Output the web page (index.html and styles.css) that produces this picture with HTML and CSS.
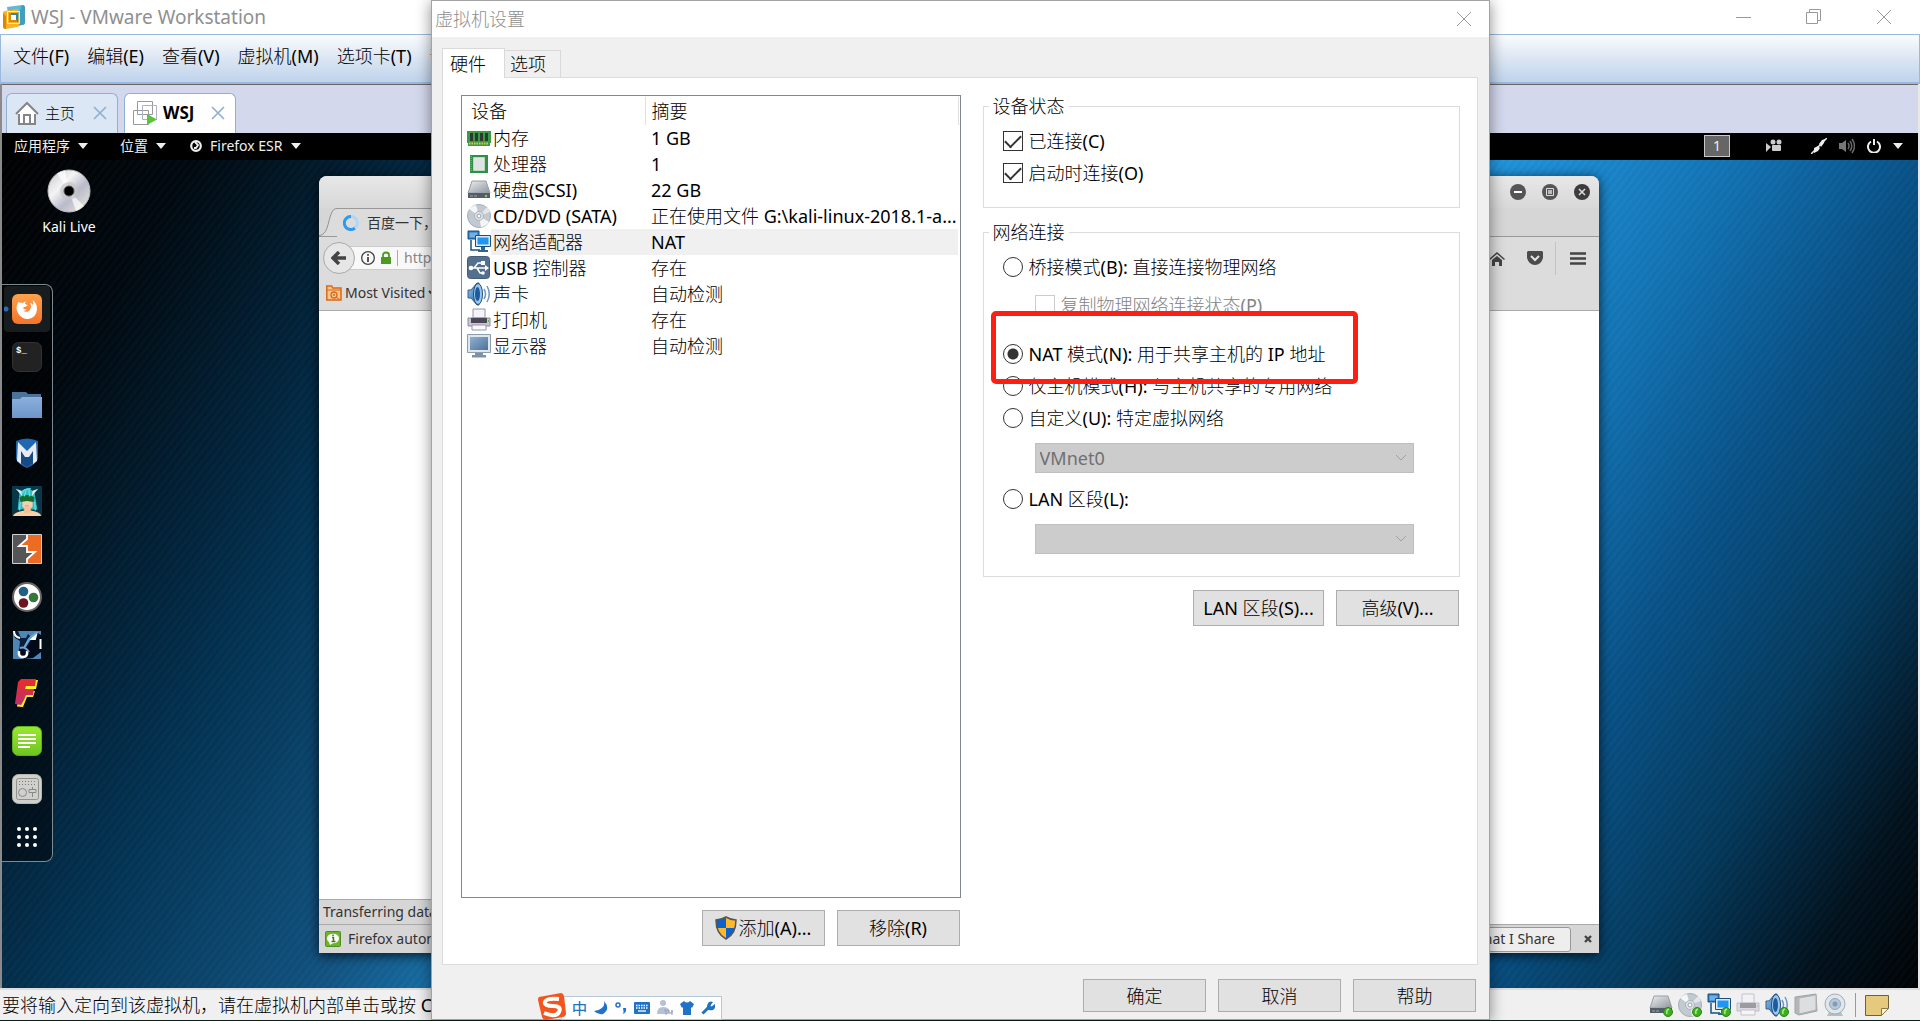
FILE: index.html
```html
<!DOCTYPE html>
<html lang="zh-CN">
<head>
<meta charset="utf-8">
<title>WSJ - VMware Workstation</title>
<link rel="stylesheet" href="styles.css">
</head>
<body>
<svg class="defs" aria-hidden="true">
  <defs>
    <linearGradient id="g-metal" x1="0" y1="0" x2="1" y2="1"><stop offset="0" stop-color="#eceef1"/><stop offset="1" stop-color="#8f959d"/></linearGradient>
    <linearGradient id="g-blue" x1="0" y1="0" x2="1" y2="1"><stop offset="0" stop-color="#8fc3ee"/><stop offset="1" stop-color="#1d63a8"/></linearGradient>
    <linearGradient id="g-screen" x1="0" y1="0" x2="1" y2="1"><stop offset="0" stop-color="#8fb0d0"/><stop offset="1" stop-color="#4d7299"/></linearGradient>
    <linearGradient id="g-disc" x1="0" y1="0" x2="1" y2="1"><stop offset="0" stop-color="#c9c6ca"/><stop offset=".35" stop-color="#f4f4f4"/><stop offset=".6" stop-color="#b9bacb"/><stop offset="1" stop-color="#eeeedd"/></linearGradient>
    <linearGradient id="g-fox" x1="0" y1="0" x2="0" y2="1"><stop offset="0" stop-color="#ffa14c"/><stop offset="1" stop-color="#f2742b"/></linearGradient>
    <linearGradient id="g-green" x1="0" y1="0" x2="0" y2="1"><stop offset="0" stop-color="#98ea2e"/><stop offset="1" stop-color="#6fc322"/></linearGradient>
    <linearGradient id="g-folder" x1="0" y1="0" x2="0" y2="1"><stop offset="0" stop-color="#8db0dc"/><stop offset="1" stop-color="#6d96c9"/></linearGradient>
    <linearGradient id="g-f" x1="0" y1="0" x2="0" y2="1"><stop offset="0" stop-color="#ee2a2a"/><stop offset="1" stop-color="#b8336e"/></linearGradient>
    <symbol id="i-hdd" viewBox="0 0 24 24"><path d="M5 3h14l4 12H1z" fill="url(#g-metal)" stroke="#9a9fa5"/><path d="M1 15h22v5H1z" fill="#535d68"/><path d="M3 17h3v2H3zM7 17h3v2H7z" fill="#79838d"/><circle cx="19" cy="18" r="1.200" fill="#7ed348"/></symbol>
    <symbol id="i-cd" viewBox="0 0 24 24"><circle cx="12" cy="12" r="11.500" fill="#c3c9d0" stroke="#a5adb6"/><path d="M12 12 2 5A12 12 0 0 1 9 1zM12 12l10 6a12 12 0 0 1-8 5z" fill="#f4f6f8"/><path d="M12 12 20 3a12 12 0 0 1 3 5z" fill="#e2e6ea"/><circle cx="12" cy="12" r="4.500" fill="#dfe4e8" stroke="#aab3bb"/><circle cx="12" cy="12" r="2" fill="#fff" stroke="#98a2ac"/></symbol>
    <symbol id="i-net" viewBox="0 0 24 24"><path d="M4 10v10h9" fill="none" stroke="#1d4f7c" stroke-width="1.500"/><path d="M1 1h11v8H1z" fill="#2f7cc0" stroke="#1d4f7c"/><path d="M2.500 2.500h8v5h-8z" fill="#6db1ea"/><path d="M8.500 5.500h15v11h-15z" fill="#d8e8f6" stroke="#1d4f7c"/><path d="M10.500 7.500h11v7h-11z" fill="#1f96f0"/><path d="M14 17h4v3h-4z" fill="#2a6599"/><path d="M11 20h10v2H11z" fill="#2a6599"/></symbol>
    <symbol id="i-printer" viewBox="0 0 24 24"><path d="M6 1h12v9H6z" fill="#f4f4f8" stroke="#9a94ae"/><path d="M1 10h22v8H1z" fill="#c9c6d3" stroke="#8f8aa2"/><path d="M4 10h16v5H4z" fill="#4a4856"/><path d="M5 17h14v5H5z" fill="#fafafc" stroke="#9a94ae"/><path d="M21 12h1v2h-1z" fill="#52c234"/></symbol>
    <symbol id="i-sound" viewBox="0 0 24 24"><path d="M1 8h3l6-7h2v22h-2l-6-7H1z" fill="url(#g-blue)" stroke="#3b5e82"/><ellipse cx="11" cy="12" rx="4.500" ry="10.500" fill="#9cc6ee" stroke="#24507c"/><ellipse cx="10.500" cy="12" rx="2.500" ry="7" fill="#1c5c9e"/><path d="M17 7q3 5 0 10M20 4q4.500 8 0 16" fill="none" stroke="#6c98c4" stroke-width="1.500"/></symbol>
    <symbol id="i-ok" viewBox="0 0 10 10"><circle cx="5" cy="5" r="4.500" fill="#3fae22" stroke="#2c8416"/><path d="M4 7q-1-4 2-5" fill="none" stroke="#a8ee84" stroke-width="1.500"/></symbol>
    <symbol id="i-x" viewBox="0 0 16 16"><path d="M1 1l14 14M15 1 1 15" fill="none" stroke="currentColor"/></symbol>
    <symbol id="i-x-bold" viewBox="0 0 14 14"><path d="M1 1l12 12M13 1 1 13" fill="none" stroke="currentColor" stroke-width="1.700"/></symbol>
    <symbol id="i-caret" viewBox="0 0 10 6"><path d="M0 0h10L5 6z" fill="currentColor"/></symbol>
    <symbol id="i-chev" viewBox="0 0 12 8"><path d="M1 1l5 5 5-5" fill="none" stroke="#a0a0a0"/></symbol>
  </defs>
</svg>

<header class="titlebar">
  <svg class="app-icon" viewBox="0 0 24 24"><path d="M5 2 20 0q3 0 3 3v14q0 3-3 3L8 22z" fill="#5fb9d0"/><path d="M20 0q3 0 3 3v14q0 3-3 3l-3 .5V9z" fill="#3f9fbd"/><path d="M3 6l13-2 1 16q0 2-2 2L4 24q-3 0-3-3L1 8q0-2 2-2z" fill="#f8b323"/><path d="M1 8v13q0 3 3 3V11z" fill="#d8870c"/><path d="M5.500 6.500h12v12h-12z" fill="none" stroke="#fff" stroke-width=".8"/><path d="M8 9h7v7H8z" fill="#fff" stroke="#2e86a8" stroke-width="2"/><path d="M8 8v8h7" fill="none" stroke="#d8870c" stroke-width="2"/></svg>
  <h1 class="app-title">WSJ - VMware Workstation</h1>
  <div class="win-controls">
    <button type="button" class="plain" aria-label="最小化"><svg width="16" height="16" viewBox="0 0 16 16"><path d="M0 8.500h15" stroke="#999"/></svg></button>
    <button type="button" class="plain" aria-label="还原"><svg width="16" height="16" viewBox="0 0 16 16"><path d="M.5 3.500h11v11H.5zM3.500 3.500v-3h11v11h-3" fill="none" stroke="#999"/></svg></button>
    <button type="button" class="plain grey" aria-label="关闭"><svg width="16" height="16"><use href="#i-x"/></svg></button>
  </div>
</header>

<nav class="menubar">
  <a href="#">文件(F)</a><a href="#">编辑(E)</a><a href="#">查看(V)</a><a href="#">虚拟机(M)</a><a href="#">选项卡(T)</a><a href="#">帮</a>
</nav>

<main class="vm">
  <div class="vm-tabs">
    <div class="vm-tab">
      <svg width="24" height="24" viewBox="0 0 24 24"><path d="M4 11v12h16V11" fill="#fff" stroke="#858585" stroke-width="2"/><path d="M1 13 12 2l11 11" fill="#fff" stroke="#858585" stroke-width="2"/><path d="M9 22v-8h6v8" fill="none" stroke="#858585" stroke-width="2"/></svg>
      <span>主页</span>
      <button type="button" class="plain tab-x" aria-label="关闭主页"><svg width="14" height="14"><use href="#i-x-bold"/></svg></button>
    </div>
    <div class="vm-tab current">
      <svg width="24" height="24" viewBox="0 0 24 24"><path d="M4.500.500h15v13h-15zM.500 9.500h15v14H.500z" fill="none" stroke="#999"/><path d="M9.500 4.500h14v14h-14z" fill="none" stroke="#aab4c4"/><path d="M14 13l10 5.500L14 24z" fill="#5cc23a"/></svg>
      <span>WSJ</span>
      <button type="button" class="plain tab-x" aria-label="关闭 WSJ"><svg width="14" height="14"><use href="#i-x-bold"/></svg></button>
    </div>
  </div>

  <div class="topbar">
    <a href="#">应用程序 <svg width="10" height="6"><use href="#i-caret"/></svg></a>
    <a href="#">位置 <svg width="10" height="6"><use href="#i-caret"/></svg></a>
    <a href="#" class="fox"><svg width="12" height="12" viewBox="0 0 12 12"><circle cx="6" cy="6" r="4.800" fill="none" stroke="#eee" stroke-width="2.200"/><path d="M5 2l3 3-2 3H4" fill="none" stroke="#eee" stroke-width="1.800"/></svg>Firefox ESR <svg width="10" height="6"><use href="#i-caret"/></svg></a>
    <div class="tray">
      <span class="workspace">1</span>
      <svg class="t-cam" width="16" height="14" viewBox="0 0 16 14"><circle cx="7" cy="3" r="2.500" fill="#ccc"/><circle cx="13" cy="3" r="2.500" fill="#ccc"/><rect x="6" y="6" width="9" height="6" rx="1" fill="#ccc"/><path d="M0 4l5 4-5 5z" fill="#ccc"/></svg>
      <svg class="t-plug" width="16" height="16" viewBox="0 0 16 16"><path d="M0 16 16 0" stroke="#eee" stroke-width="1.500"/><path d="M3 10l4-2 2 2-2 3-4 2zM8 6l3-4 3-1-1 4-3 4z" fill="#eee"/></svg>
      <svg class="t-vol" width="16" height="16" viewBox="0 0 16 16"><path d="M0 5h3l4-3v12l-4-3H0z" fill="#777"/><path d="M9 5q2 3 0 6M11 3q3.500 5 0 10M13 1q5 7 0 14" fill="none" stroke="#666" stroke-width="1.500"/></svg>
      <svg class="t-pow" width="14" height="14" viewBox="0 0 14 14"><path d="M4 2.500a6 6 0 1 0 6 0M7 0v6" fill="none" stroke="#eee" stroke-width="2"/></svg>
      <svg width="10" height="6" class="t-caret"><use href="#i-caret"/></svg>
    </div>
  </div>

  <div class="desktop">
    <a href="#" class="desk-icon">
      <svg width="44" height="44" viewBox="0 0 44 44"><circle cx="22" cy="22" r="21" fill="url(#g-disc)" stroke="#bbb"/><path d="M22 22 10 4.500A21 21 0 0 1 18 1.500zM22 22l15 15a21 21 0 0 1-8 5z" fill="#fff" opacity=".7"/><circle cx="22" cy="22" r="9" fill="#c6c6c8" opacity=".7"/><circle cx="22" cy="22" r="5" fill="#000" stroke="#555"/></svg>
      Kali Live
    </a>

    <nav class="dock">
      <button type="button" class="plain on" aria-label="Firefox"><svg viewBox="0 0 30 30"><rect width="30" height="30" rx="6" fill="url(#g-fox)"/><path d="M6.500 8q-4 6 0 12 4 5.500 10 5 8-1.500 8.500-10 0-6-4.500-9 1.500 3 .5 5-1.500-2-3-2 1.500 2 1 4-.5 3-3 4.500-3 1-5-1 3 .5 4-1-3 .5-4-1.500 1-1.500 3-1.500 1-1 2-1.500-2 0-3-1.500 0-1 1-2-2 0-3 1.500-2-.5-3.500-.500z" fill="#fff"/></svg></button>
      <button type="button" class="plain" aria-label="终端"><svg viewBox="0 0 30 30"><rect x=".5" y=".5" width="29" height="29" rx="6" fill="#222" stroke="#333"/><text x="4" y="11" class="term">$_</text></svg></button>
      <button type="button" class="plain" aria-label="文件"><svg viewBox="0 0 30 30"><path d="M0 2h14l2 2h13v5H0z" fill="#4a739b"/><path d="M0 9h8l2-2h20v21H0z" fill="url(#g-folder)"/></svg></button>
      <button type="button" class="plain" aria-label="Metasploit"><svg viewBox="0 0 30 30"><path d="M4 3q11-5 22 0v18q-3 6-11 9-8-3-11-9z" fill="#1f67b0"/><path d="M15 14v15l-6-4V12zM15 14l6-2v13l-6 4z" fill="#174a85"/><path d="M6 4l9 9 9-9 1 19-4 3V13l-4 6h-4l-4-6v13l-4-3z" fill="#e8eaf2"/></svg></button>
      <button type="button" class="plain" aria-label="Armitage"><svg viewBox="0 0 32 32"><path d="M0 0h32v32H0z" fill="#06384a"/><path d="M8 7q8-8 16 0l3 18H6z" fill="#31bcc4"/><path d="M4 3l6 2 1 6zM28 3l-6 2-1 6z" fill="#e6ece8"/><path d="M11 13h11v9q-5 6-11 0z" fill="#f7cfae"/><path d="M1 32q1-4 12-6h7q11 2 11 6z" fill="#f9cfa5"/><path d="M13 22h7v7h-7z" fill="#f3c299"/><path d="M8 12q8-5 16 0l-1 5-7-1-7 1z" fill="#176b2c"/><path d="M11 8q1-5 9-5M13 11l2-6M19 11l-1-7M9 17l-1 9M24 17l1 9" fill="none" stroke="#5fe0e2" stroke-width="1.500"/><path d="M14 21h4" stroke="#d98"/></svg></button>
      <button type="button" class="plain" aria-label="Burp Suite"><svg viewBox="0 0 30 30"><path d="M1 1h28v28H1z" fill="#ec6c23"/><path d="M1 1h14v5l-7 6h7v7h7l-7 6v4H1z" fill="#555557"/><path d="M15 1v4l-8 7h8v6h8l-8 7v4" fill="none" stroke="#fff" stroke-width="1.800"/><path d="M.5.5h29v29H.5z" fill="none" stroke="#d0d0d0"/></svg></button>
      <button type="button" class="plain" aria-label="Maltego"><svg viewBox="0 0 30 30"><circle cx="15" cy="15" r="14" fill="#fff" stroke="#6b6664" stroke-width="2"/><circle cx="11.500" cy="9.500" r="4.800" fill="#215f85"/><circle cx="21.500" cy="15.500" r="4.800" fill="#35783b"/><circle cx="11.500" cy="21" r="4.800" fill="#6b1522"/></svg></button>
      <button type="button" class="plain" aria-label="BeEF"><svg viewBox="0 0 30 30"><path d="M1 1h28v28H1z" fill="#4e86b6"/><path d="M14 17 24 2l5 3v17l-8 6-9 1-6-4 1-6z" fill="#020a1a"/><path d="M1 1h5l3 7h5l2-4 2 2-5 11-6 4 1-10-5-3z" fill="#0c1d38"/><path d="M2 1q0 6 6 7M19 9l5-4-1 4zM28.500 9v10" fill="none" stroke="#fff" stroke-width="2"/><path d="M7 21q-1 6 4 6t4-6" fill="none" stroke="#fff" stroke-width="2.500"/><path d="M8 18q5-2 9 4M12 18l5-9 8-7" fill="none" stroke="#6aa6d6" stroke-width="2"/></svg></button>
      <button type="button" class="plain" aria-label="Faraday"><svg viewBox="0 0 30 30"><path d="M10 2h16l-2 9h-8v2h7l-2 6h-6l-2 5-2 5-6-.5z" fill="#ffef1a"/><path d="M9 1h15l-1 7h-9l-1 3h9l-1 6h-7l-2 5-3 5-6-1L6 4z" fill="url(#g-f)"/></svg></button>
      <button type="button" class="plain" aria-label="Leafpad"><svg viewBox="0 0 30 30"><rect x=".5" y=".5" width="29" height="29" rx="6" fill="url(#g-green)" stroke="#5fae1c"/><path d="M6 9h18M6 13h18M6 17h18M6 21h12" stroke="#fff" stroke-width="2"/></svg></button>
      <button type="button" class="plain" aria-label="Tweaks"><svg viewBox="0 0 30 30"><rect x=".5" y=".5" width="29" height="29" rx="6" fill="#d0d1cc" stroke="#b5b6b1"/><rect x="4.500" y="4.500" width="22" height="21" rx="2" fill="none" stroke="#8f908b"/><path d="M7 7.500h18M7 10.500h18" stroke="#777" stroke-dasharray="1 2"/><circle cx="10.500" cy="18.500" r="4" fill="none" stroke="#888"/><path d="M17 15.500h7v3h-7zM20.500 13v2M20.500 19v4" fill="none" stroke="#888"/></svg></button>
      <button type="button" class="plain" aria-label="显示应用程序"><svg viewBox="0 0 30 30" fill="#fff"><circle cx="7" cy="7" r="2"/><circle cx="15" cy="7" r="2"/><circle cx="23" cy="7" r="2"/><circle cx="7" cy="15" r="2"/><circle cx="15" cy="15" r="2"/><circle cx="23" cy="15" r="2"/><circle cx="7" cy="23" r="2"/><circle cx="15" cy="23" r="2"/><circle cx="23" cy="23" r="2"/></svg></button>
    </nav>

    <section class="browser">
      <div class="b-title">
        <button type="button" class="plain" aria-label="Minimize"><svg width="16" height="16" viewBox="0 0 16 16"><circle cx="8" cy="8" r="8" fill="#555"/><path d="M4 8h8" stroke="#fff" stroke-width="2"/></svg></button>
        <button type="button" class="plain" aria-label="Maximize"><svg width="16" height="16" viewBox="0 0 16 16"><circle cx="8" cy="8" r="8" fill="#555"/><path d="M4.500 4.500h7v7h-7z" fill="none" stroke="#ddd"/><path d="M6 6h4v4H6z" fill="#bbb"/></svg></button>
        <button type="button" class="plain" aria-label="Close"><svg width="16" height="16" viewBox="0 0 16 16"><circle cx="8" cy="8" r="8" fill="#3c3c3c"/><path d="M5 5l6 6M11 5l-6 6" stroke="#ddd" stroke-width="1.500"/></svg></button>
      </div>
      <div class="b-tabs">
        <svg class="curve" width="18" height="28" viewBox="0 0 18 28"><path d="M18 .5C8 .5 11 27.500 0 27.500L18 28z" fill="#dcdcdc"/><path d="M18 .5C8 .5 12 27.500 0 27.500" fill="none" stroke="#8c9096"/></svg>
        <div class="b-tab"><svg width="16" height="16" viewBox="0 0 16 16"><path d="M8 1.500a6.500 6.500 0 1 0 4 11.500" fill="none" stroke="#2b9bf4" stroke-width="3"/><path d="M8 1.500A6.500 6.500 0 0 1 12 13" fill="none" stroke="#b5d6f1" stroke-width="3"/></svg>百度一下，</div>
      </div>
      <div class="b-nav">
        <button type="button" class="plain back" aria-label="Back"><svg width="16" height="14" viewBox="0 0 16 14"><path d="M8 1 2 7l6 6M2 7h13" fill="none" stroke="#444" stroke-width="3.500"/></svg></button>
        <div class="url">
          <svg width="14" height="14" viewBox="0 0 14 14"><circle cx="7" cy="7" r="6.300" fill="none" stroke="#444" stroke-width="1.300"/><path d="M7 6v5M7 3v1.800" stroke="#444" stroke-width="1.800"/></svg>
          <svg width="10" height="14" viewBox="0 0 10 14"><path d="M0 6h10v7H0z" fill="#4c9a22"/><path d="M2 7V4q0-2.500 3-2.500T8 4v3" fill="none" stroke="#4c9a22" stroke-width="1.800"/></svg>
          <span class="url-text">https</span>
        </div>
        <div class="b-tools">
          <svg width="16" height="15" viewBox="0 0 16 15"><path d="M0 8l8-7 8 7-1 1-7-6-7 6z" fill="#444"/><path d="M3 9l5-4 5 4v6h-3v-4H6v4H3z" fill="#444"/></svg>
          <svg width="16" height="14" viewBox="0 0 16 14"><path d="M1 0h14l1 1v6q-2 7-8 7T0 7V1z" fill="#4c4c4c"/><path d="M4 5l4 4 4-4" fill="none" stroke="#e6e6e6" stroke-width="2"/></svg>
          <svg class="burger" width="16" height="13" viewBox="0 0 16 13"><path d="M0 1.500h16M0 6.500h16M0 11.500h16" stroke="#444" stroke-width="2.600"/></svg>
        </div>
      </div>
      <div class="b-marks"><svg width="16" height="16" viewBox="0 0 16 16"><path d="M.8 1h5l1 2H15v12H.8z" fill="#f7c78f" stroke="#d9681a" stroke-width="1.500"/><path d="M1 5h14" stroke="#d9681a"/><circle cx="8" cy="10" r="3" fill="none" stroke="#d9681a" stroke-width="1.300"/><circle cx="8" cy="10" r="1" fill="#d9681a"/><path d="M10 12l3 2" stroke="#d9681a"/></svg>Most Visited<svg width="8" height="6" viewBox="0 0 8 6"><path d="M1 1l3 3 3-3" fill="none" stroke="#333" stroke-width="1.800"/></svg></div>
      <div class="b-page"><span class="b-status">Transferring data</span></div>
      <div class="b-note">
        <svg width="16" height="16" viewBox="0 0 16 16"><rect x=".5" y=".5" width="15" height="15" rx="1" fill="#6cb52b" stroke="#4e8f1a"/><ellipse cx="8" cy="7.500" rx="6" ry="4.800" fill="#fff"/><path d="M4 11l1 3 3-2z" fill="#fff"/><path d="M7 6.500h1.500V10M6.500 10.500h4M8 3.500V5" fill="none" stroke="#3f7a12" stroke-width="1.500"/></svg>
        <span>Firefox automatically</span>
        <button type="button" class="share">Choose What I Share</button>
        <button type="button" class="plain" aria-label="Close"><svg width="8" height="8" viewBox="0 0 8 8"><path d="M1 1l6 6M7 1 1 7" stroke="#444" stroke-width="2.400"/></svg></button>
      </div>
    </section>
  </div>
</main>

<footer class="statusbar">
  <span class="hint">要将输入定向到该虚拟机，请在虚拟机内部单击或按 Ctrl</span>
  <div class="devices">
    <span class="dev"><svg><use href="#i-hdd"/></svg><svg class="ok"><use href="#i-ok"/></svg></span>
    <span class="dev"><svg><use href="#i-cd"/></svg><svg class="ok"><use href="#i-ok"/></svg></span>
    <span class="dev"><svg><use href="#i-net"/></svg><svg class="ok"><use href="#i-ok"/></svg></span>
    <span class="dev faded"><svg><use href="#i-printer"/></svg></span>
    <span class="dev"><svg><use href="#i-sound"/></svg><svg class="ok"><use href="#i-ok"/></svg></span>
    <span class="dev"><svg viewBox="0 0 24 24"><path d="M1 4l21-3 1 17-18 4-4-2z" fill="#b4b7ba" stroke="#a0a3a6"/><path d="M5 5l17-3v15L5 21z" fill="#dcdedf" stroke="#b0b3b5"/></svg></span>
    <span class="dev"><svg viewBox="0 0 24 24"><path d="M6 19h12l2 4H4z" fill="#b6bdc3"/><circle cx="12" cy="11" r="10" fill="#dfe6ec" stroke="#a2adb7"/><circle cx="12" cy="11" r="5.500" fill="#b7c8d6" stroke="#94a5b4"/><circle cx="12" cy="11" r="2.500" fill="#7f9db8"/></svg></span>
    <span class="dev note"><svg viewBox="0 0 24 24"><path d="M.5 2.500h23v13l-7 7H.5z" fill="#e5ca7d" stroke="#6f603a"/><path d="M16.500 22.500v-7h7z" fill="#fdf4cf" stroke="#8a7849"/></svg></span>
  </div>
</footer>

<section class="dialog" role="dialog" aria-label="虚拟机设置">
  <header class="d-title"><h2>虚拟机设置</h2><button type="button" class="plain grey" aria-label="关闭"><svg width="16" height="16"><use href="#i-x"/></svg></button></header>
  <div class="d-tabs"><button type="button" class="d-tab current">硬件</button><button type="button" class="d-tab">选项</button></div>
  <div class="d-page">
    <div class="left">
      <div class="list">
        <table>
          <thead><tr><th class="c1">设备</th><th>摘要</th></tr></thead>
          <tbody>
            <tr><td><div class="cell"><svg viewBox="0 0 24 24"><path d="M0 5h24v12h-1v3H1v-3H0z" fill="#3b9a45"/><path d="M3 7h3v8H3zM8 7h3v8H8zM13 7h3v8h-3zM18 7h3v8h-3z" fill="#303833"/><path d="M2 17.500h20" stroke="#e0c64e" stroke-width="2" stroke-dasharray="1.500 1"/></svg><span>内存</span></div></td><td>1 GB</td></tr>
            <tr><td><div class="cell"><svg viewBox="0 0 24 24"><path d="M3 3h18v18H3z" fill="#2f9148"/><path d="M6.500 5.500h11v13h-11z" fill="#dfe3e2" stroke="#b9d9c0"/><path d="M4 4v16" stroke="#7fce8d" stroke-dasharray="1 1"/></svg><span>处理器</span></div></td><td>1</td></tr>
            <tr><td><div class="cell"><svg><use href="#i-hdd"/></svg><span>硬盘(SCSI)</span></div></td><td>22 GB</td></tr>
            <tr><td><div class="cell"><svg><use href="#i-cd"/></svg><span>CD/DVD (SATA)</span></div></td><td>正在使用文件 G:\kali-linux-2018.1-a...</td></tr>
            <tr class="sel"><td><div class="cell"><svg><use href="#i-net"/></svg><span>网络适配器</span></div></td><td>NAT</td></tr>
            <tr><td><div class="cell"><svg viewBox="0 0 24 24"><rect x=".5" y=".5" width="22" height="22" rx="3" fill="#54708f" stroke="#455d78"/><path d="M3 12h17M7 12l4-5h4M10 12l3 5h3" fill="none" stroke="#fff" stroke-width="1.500"/><circle cx="4" cy="12" r="2.300" fill="#fff"/><path d="M18 9l4 3-4 3zM14 5h4v4h-4z" fill="#fff"/><circle cx="16" cy="17" r="1.800" fill="#fff"/></svg><span>USB 控制器</span></div></td><td>存在</td></tr>
            <tr><td><div class="cell"><svg><use href="#i-sound"/></svg><span>声卡</span></div></td><td>自动检测</td></tr>
            <tr><td><div class="cell"><svg><use href="#i-printer"/></svg><span>打印机</span></div></td><td>存在</td></tr>
            <tr><td><div class="cell"><svg viewBox="0 0 24 24"><path d="M.5.500h23v18H.5z" fill="#dfe6ec" stroke="#8d9dac"/><path d="M3 3h18v13H3z" fill="url(#g-screen)"/><path d="M8 19h8v2H8zM5 21h14v2.500H5z" fill="#7a93ab"/></svg><span>显示器</span></div></td><td>自动检测</td></tr>
          </tbody>
        </table>
      </div>
      <div class="row-btns list-btns">
        <button type="button" class="btn"><svg width="22" height="24" viewBox="0 0 22 24"><path d="M11 1q5 3 10 3 0 14-10 19Q1 18 1 4q5 0 10-3z" fill="#fdb92c"/><path d="M11 1v11H1V4q5 0 10-3zM11 12h9q-2 8-9 11z" fill="#0b62cc"/><path d="M11 1q5 3 10 3 0 14-10 19Q1 18 1 4q5 0 10-3z" fill="none" stroke="#555" stroke-width="1.500"/></svg>添加(A)...</button>
        <button type="button" class="btn">移除(R)</button>
      </div>
    </div>
    <div class="right">
      <fieldset>
        <legend>设备状态</legend>
        <label class="opt"><input type="checkbox" checked><span>已连接(C)</span></label>
        <label class="opt"><input type="checkbox" checked><span>启动时连接(O)</span></label>
      </fieldset>
      <fieldset class="network">
        <legend>网络连接</legend>
        <label class="opt"><input type="radio" name="net"><span>桥接模式(B): 直接连接物理网络</span></label>
        <label class="opt sub off"><input type="checkbox" disabled><span>复制物理网络连接状态(P)</span></label>
        <label class="opt nat"><input type="radio" name="net" checked><span>NAT 模式(N): 用于共享主机的 IP 地址</span></label>
        <label class="opt"><input type="radio" name="net"><span>仅主机模式(H): 与主机共享的专用网络</span></label>
        <label class="opt"><input type="radio" name="net"><span>自定义(U): 特定虚拟网络</span></label>
        <div class="combo"><select disabled aria-label="特定虚拟网络"><option>VMnet0</option></select><svg width="12" height="8"><use href="#i-chev"/></svg></div>
        <label class="opt"><input type="radio" name="net"><span>LAN 区段(L):</span></label>
        <div class="combo"><select disabled aria-label="LAN 区段"><option></option></select><svg width="12" height="8"><use href="#i-chev"/></svg></div>
        <div class="highlight"></div>
      </fieldset>
      <div class="row-btns net-btns">
        <button type="button" class="btn wide">LAN 区段(S)...</button>
        <button type="button" class="btn">高级(V)...</button>
      </div>
    </div>
  </div>
  <div class="row-btns d-foot">
    <button type="button" class="btn">确定</button>
    <button type="button" class="btn">取消</button>
    <button type="button" class="btn">帮助</button>
  </div>
</section>

<div class="ime">
  <svg class="ime-logo" width="28" height="28" viewBox="0 0 28 28"><path d="M1 5 23 1q2 0 3 3l2 17q0 3-3 4L8 28q-3 0-4-3L0 8q0-2 1-3z" fill="#f4541d"/><path d="M21 7q-13-1-14 3t8 4 6 6-15 1" fill="none" stroke="#fff" stroke-width="4"/></svg>
  <b>中</b>
  <svg width="14" height="14" viewBox="0 0 14 14"><path d="M10 0q2 8-10 10 4 4 9 3 8-5 1-13z" fill="#2073c4"/></svg>
  <svg width="12" height="14" viewBox="0 0 12 14"><circle cx="3" cy="4" r="2" fill="none" stroke="#2073c4" stroke-width="1.500"/><path d="M8 7h3q1 4-3 6 1-2 0-6z" fill="#2073c4"/></svg>
  <svg width="16" height="14" viewBox="0 0 16 14"><rect y="1" width="16" height="12" rx="1" fill="#2073c4"/><path d="M2 4.500h12M2 7h12" stroke="#fff" stroke-width="1.300" stroke-dasharray="1.500 1"/><path d="M4 10h8" stroke="#fff" stroke-width="1.300"/></svg>
  <svg width="16" height="16" viewBox="0 0 16 16"><circle cx="6" cy="3" r="3" fill="#b4c0d6"/><path d="M0 14q0-7 6-7t6 4v3z" fill="#b4c0d6"/><path d="M7 10h2v5M10 10h2v3h3v-3 5" fill="none" stroke="#8f9fbc"/></svg>
  <svg width="14" height="14" viewBox="0 0 14 14"><path d="M4 0q3 3 6 0l4 3-2 4-1-1v8H3V6L2 7 0 3z" fill="#2073c4"/></svg>
  <svg width="14" height="14" viewBox="0 0 14 14"><path d="M1.500 12.500 8 6" stroke="#2073c4" stroke-width="3"/><path d="M12 1 9.500 4.500l1 1L14 3q1 4-2 6-4 1-6-1-1-4 2-7 2-1 4 0z" fill="#2073c4"/></svg>
</div>
</body>
</html>
```
FILE: styles.css
```css
* { box-sizing: border-box; }

body {
  margin: 0;
  min-height: 100vh;
  display: flex;
  flex-direction: column;
  position: relative;
  overflow: hidden;
  background: #fff;
  color: #000;
  font: 18px/24px "Noto Sans", "Noto Sans CJK SC Light", "Noto Sans CJK SC", sans-serif;
}

a { color: inherit; text-decoration: none; }
svg { flex: none; display: block; }
h1, h2 { margin: 0; font-weight: 400; font-size: 18px; color: #8f8f8f; }
button { font: inherit; color: inherit; }
.defs { position: absolute; width: 0; height: 0; }
.plain { border: 0; padding: 0; background: none; display: grid; place-items: center; }
.grey { color: #999; }

/* Main window frame */
.titlebar { height: 34px; display: flex; align-items: center; padding: 0 28px 0 2px; gap: 5px; }
.app-title { font-size: 19px; }
.app-icon { width: 24px; height: 24px; }
.win-controls { margin-left: auto; display: flex; gap: 54px; }

.menubar {
  height: 50px;
  display: flex;
  gap: 18px;
  align-items: center;
  padding: 0 12px 6px;
  border: 1px solid #99b9de;
  border-bottom-width: 2px;
  background: linear-gradient(#fafcfe, #dce6f3 50%, #bfd3eb);
  white-space: nowrap;
}

.vm { flex: 1; display: flex; flex-direction: column; border-left: 2px solid #8a8a8a; border-right: 2px solid #e8e8e8; }
.vm-tabs { height: 49px; display: flex; gap: 6px; padding: 8px 4px 0; border-top: 1px solid #6b6665; background: #d4d8ec; }
.vm-tab {
  width: 112px;
  display: flex;
  align-items: center;
  gap: 6px;
  padding: 0 10px 2px 8px;
  font-size: 15px;
  border: 1px solid #8fb0cf;
  border-bottom: 0;
  border-radius: 6px 6px 0 0;
  background: #dbe7f4;
}
.vm-tab.current { background: #fff; font-weight: 700; font-size: 17px; }
.tab-x { margin-left: auto; color: #8fb0cf; }

/* Guest top bar */
.topbar { height: 27px; display: flex; align-items: center; background: #000; color: #eee; font-family: "Noto Sans", "Noto Sans CJK SC", sans-serif; font-size: 14px; padding: 0 15px 2px 12px; white-space: nowrap; }
.topbar a { display: flex; align-items: center; gap: 8px; margin-right: 32px; }
.topbar .fox { margin-left: -8px; }
.tray { margin-left: auto; display: flex; align-items: center; }
.workspace { width: 26px; height: 22px; line-height: 20px; text-align: center; border: 1px solid #c8c8c8; background: #666; }
.t-cam { margin-left: 36px; }
.t-plug { margin-left: 29px; }
.t-vol, .t-pow { margin-left: 12px; }
.t-caret { margin-left: 12px; }

.desktop {
  flex: 1;
  position: relative;
  background:
    repeating-linear-gradient(128deg, rgba(255, 255, 255, .015) 0 3px, rgba(0, 0, 0, .02) 3px 6px),
    linear-gradient(120deg, #000102 0%, #000910 8%, #033455 22%, #11527f 33%, #1c7fbd 41%, #2196de 48%, #2196de 62%, #1374b5 72%, #085288 80%, #04395c 88%, #01121e 95%, #000204 100%);
}
.desk-icon { position: absolute; left: 17px; top: 9px; width: 100px; display: grid; justify-items: center; gap: 3px; color: #fff; font-size: 14px; line-height: 22px; }

.dock {
  position: absolute;
  left: 0;
  top: 124px;
  width: 51px;
  padding: 1px 2px;
  display: grid;
  gap: 2px;
  background: rgba(0, 0, 0, .5);
  border: 1px solid #7f8990;
  border-left: 0;
  border-radius: 0 8px 8px 0;
}
.dock button { height: 46px; border-radius: 4px; }
.dock svg { width: 30px; height: 30px; }
.dock .on { background: #171c1f radial-gradient(circle at 2px 50%, #2b6cb8 2px, transparent 3px); }
.term { font: 700 9px "Liberation Mono", monospace; fill: #fff; }

/* Guest browser window */
.browser {
  position: absolute;
  left: 317px;
  right: 319px;
  top: 16px;
  bottom: 35px;
  display: flex;
  flex-direction: column;
  border-radius: 8px 8px 0 0;
  overflow: hidden;
  background: #dcdcdc;
  box-shadow: 0 2px 12px rgba(0, 0, 0, .75);
  color: #333;
  font-family: "Noto Sans", "Noto Sans CJK SC", sans-serif;
  font-size: 14px;
  line-height: 20px;
}
.b-title { height: 32px; display: flex; justify-content: flex-end; gap: 16px; padding: 0 9px; background: linear-gradient(#e8e8e8, #d8d8d8); }
.b-tabs { height: 29px; display: flex; background: #d6d6d6; border-bottom: 1px solid #999; }
.b-tab { width: 200px; display: flex; align-items: center; gap: 8px; padding-left: 6px; background: #dcdcdc; border-top: 1px solid #999; margin-bottom: -1px; }
.b-nav { height: 42px; display: flex; align-items: center; padding: 0 13px 0 4px; }
.back { width: 32px; height: 32px; border: 1px solid #aaa; border-radius: 50%; background: #e6e6e6; z-index: 1; }
.url { height: 24px; width: 600px; margin-left: -6px; padding-left: 11px; display: flex; align-items: center; gap: 6px; background: #f8f8f8; border: 1px solid #ccc; }
.url-text { border-left: 1px solid #aaa; padding-left: 6px; line-height: 16px; color: #888; }
.b-tools { margin-left: auto; display: flex; align-items: center; gap: 22px; }
.burger { box-sizing: content-box; padding: 10px 0 10px 14px; border-left: 1px solid #c4c4c4; margin-left: -10px; }
.b-marks { height: 32px; display: flex; align-items: center; gap: 3px; padding: 0 7px 4px; border-bottom: 1px solid #aaa; }
.b-page { flex: 1; display: flex; align-items: flex-end; background: #fff; }
.b-status { height: 25px; padding: 2px 4px; background: #d6d6d6; border-top: 1px solid #aaa; }
.b-note { height: 29px; display: flex; align-items: center; gap: 7px; padding: 0 7px 0 6px; background: #d6d6d6; border-top: 1px solid #aaa; }
.share { margin-left: auto; margin-right: 6px; height: 25px; padding: 0 15px; border: 1px solid #999; border-radius: 3px; background: #eee; }

/* Status bar */
.statusbar { height: 33px; display: flex; align-items: center; padding: 2px 31px 2px 2px; background: #f0f0f0; border-top: 2px solid #ddd; border-bottom: 1px solid #0c1f1a; white-space: nowrap; }
.devices { margin-left: auto; display: flex; gap: 5px; }
.dev { display: grid; width: 24px; height: 24px; }
.dev svg { grid-area: 1 / 1; width: 24px; height: 24px; }
.dev .ok { width: 10px; height: 10px; place-self: end; }
.faded { opacity: .5; }
.note { box-sizing: content-box; border-left: 1px solid #999; padding-left: 9px; margin-left: 3px; }

/* Settings dialog */
.dialog {
  position: absolute;
  left: 431px;
  right: 430px;
  top: 0;
  bottom: 1px;
  display: flex;
  flex-direction: column;
  background: #f0f0f0;
  border: 1px solid #a3a3a3;
  box-shadow: 0 2px 14px rgba(0, 0, 0, .45);
}
.d-title { height: 36px; display: flex; align-items: center; justify-content: space-between; padding: 0 17px 0 3px; background: #fff; }
.d-tabs { display: flex; align-items: flex-end; padding-left: 10px; margin-top: 11px; }
.d-tab { height: 27px; width: 56px; padding: 0 0 0 5px; border: 1px solid #d9d9d9; border-left: 0; border-bottom: 0; background: #f0f0f0; line-height: 24px; text-align: left; }
.d-tab.current { height: 30px; width: 63px; padding-left: 7px; margin-bottom: -1px; border-left: 1px solid #d9d9d9; background: #fff; z-index: 1; }
.d-page {
  flex: 1;
  margin: 0 11px 0 10px;
  padding: 17px 17px 18px 18px;
  display: grid;
  grid-template-columns: 499fr 477fr;
  gap: 22px;
  background: #fff;
  border: 1px solid #dcdcdc;
}
.left { display: flex; flex-direction: column; min-width: 0; }
.list { flex: 1; border: 1px solid #828790; padding: 1px; }
table { width: 100%; border-collapse: collapse; table-layout: fixed; }
th, td { height: 26px; padding: 0 0 0 6px; text-align: left; font-weight: 400; white-space: nowrap; overflow: hidden; line-height: 24px; }
th { height: 28px; border-right: 1px solid #e0e0e0; }
.c1 { width: 182px; padding-left: 8px; }
td:first-child { padding-left: 4px; }
.cell { display: flex; align-items: center; height: 26px; }
.cell svg { width: 24px; height: 24px; }
.cell span { flex: 1; padding-left: 2px; line-height: 26px; }
.sel td + td, .sel .cell span { background: #f0f0f0; }

.row-btns { display: flex; justify-content: flex-end; gap: 12px; }
.btn { width: 123px; height: 36px; padding: 0; display: flex; align-items: center; justify-content: center; gap: 2px; border: 1px solid #adadad; background: #e1e1e1; }
.wide { width: 131px; }
.list-btns { margin-top: 12px; padding-right: 1px; }
.net-btns { margin-top: 13px; padding-right: 1px; }
.d-foot { padding: 14px 13px 7px; }
.d-foot .btn { height: 33px; }

.right { padding-top: 2px; min-width: 0; }
fieldset { position: relative; margin: 0 0 15px; padding: 16px 45px 24px 19px; border: 1px solid #dcdcdc; display: grid; gap: 12px; min-width: 0; }
legend { margin-left: -14px; padding: 0 4px; line-height: 18px; }
.opt { display: flex; align-items: center; gap: 6px; height: 20px; white-space: nowrap; line-height: 20px; }
.opt input {
  appearance: none;
  flex: none;
  width: 20px;
  height: 20px;
  margin: 0;
  border: 1px solid #333;
  background: #fff;
}
.opt input[type="radio"] { border-radius: 50%; }
.opt input[type="radio"]:checked { background: radial-gradient(circle, #333 5px, #fff 6px); }
.opt input[type="checkbox"]:checked { display: grid; place-items: center; }
.opt input[type="checkbox"]:checked::after { content: ""; width: 14px; height: 7px; margin-bottom: 4px; border: solid #333; border-width: 0 0 2px 2px; transform: rotate(-45deg); }
.network { margin: 0; padding-bottom: 18px; }
.sub { margin: 6px 0 17px 32px; }
.off { color: #838383; }
.off input { border-color: #ccc; }
.combo { display: grid; align-items: center; margin: 3px 0 4px 32px; }
.combo select { grid-area: 1 / 1; appearance: none; width: 100%; height: 30px; padding: 0 4px; border: 1px solid #bfbfbf; border-radius: 0; background: #ccc; color: #707070; opacity: 1; font: inherit; }
.combo svg { grid-area: 1 / 1; justify-self: end; margin-right: 7px; }
.highlight { position: absolute; left: 7px; top: 70px; width: 367px; height: 73px; border: 5px solid #ff1e12; border-radius: 5px; }

/* Input method bar */
.ime {
  position: absolute;
  left: 561px;
  bottom: 1px;
  height: 24px;
  display: flex;
  align-items: center;
  gap: 7px;
  padding: 0 6px 0 10px;
  background: #fff;
  border: 1px solid #b5c8d8;
  color: #2073c4;
}
.ime b { font-size: 15px; line-height: 20px; }
.ime-logo { position: absolute; left: -24px; bottom: -1px; }
```
